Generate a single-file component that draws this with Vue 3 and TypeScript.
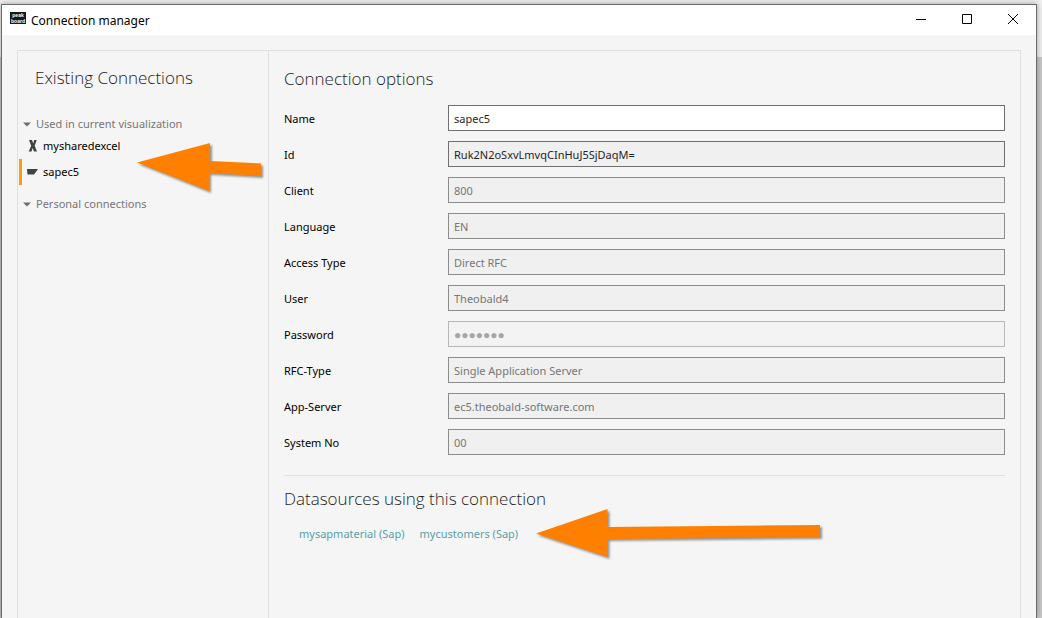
<script setup lang="ts">
import { ref } from 'vue'

type FieldState = 'active' | 'locked' | 'muted' | 'secret'

interface Field {
  id: string
  label: string
  value: string
  state: FieldState
}

interface Connection {
  name: string
  icon: 'excel' | 'sap'
}

interface Group {
  title: string
  items: Connection[]
}

const groups: Group[] = [
  {
    title: 'Used in current visualization',
    items: [
      { name: 'mysharedexcel', icon: 'excel' },
      { name: 'sapec5', icon: 'sap' },
    ],
  },
  { title: 'Personal connections', items: [] },
]

const selected = ref('sapec5')

const fields = ref<Field[]>([
  { id: 'name', label: 'Name', value: 'sapec5', state: 'active' },
  { id: 'id', label: 'Id', value: 'Ruk2N2oSxvLmvqCInHuJ5SjDaqM=', state: 'locked' },
  { id: 'client', label: 'Client', value: '800', state: 'muted' },
  { id: 'language', label: 'Language', value: 'EN', state: 'muted' },
  { id: 'access', label: 'Access Type', value: 'Direct RFC', state: 'muted' },
  { id: 'user', label: 'User', value: 'Theobald4', state: 'muted' },
  { id: 'password', label: 'Password', value: '●●●●●●●', state: 'secret' },
  { id: 'rfc', label: 'RFC-Type', value: 'Single Application Server', state: 'muted' },
  { id: 'server', label: 'App-Server', value: 'ec5.theobald-software.com', state: 'muted' },
  { id: 'system', label: 'System No', value: '00', state: 'muted' },
])

const datasources: string[] = ['mysapmaterial (Sap)', 'mycustomers (Sap)']
</script>

<template>
  <div class="desktop">
    <div class="window">
      <header class="titlebar">
        <svg class="logo" width="16" height="12" viewBox="0 0 16 12" aria-hidden="true">
          <rect width="16" height="12" fill="#16191b" />
          <text x="8" y="5">peak</text>
          <text x="8" y="11">board</text>
        </svg>
        <span class="title">Connection manager</span>
        <button class="control" type="button" aria-label="Minimize">
          <svg width="10" height="10" viewBox="0 0 10 10"><path d="M0 5.500h10" /></svg>
        </button>
        <button class="control" type="button" aria-label="Maximize">
          <svg width="10" height="10" viewBox="0 0 10 10"><path d="M.5.500h9v9h-9z" /></svg>
        </button>
        <button class="control" type="button" aria-label="Close">
          <svg width="10" height="10" viewBox="0 0 10 10"><path d="M0 0l10 10M10 0L0 10" /></svg>
        </button>
      </header>

      <div class="panel">
        <nav class="sidebar">
          <h2>Existing Connections</h2>
          <section v-for="group in groups" :key="group.title" class="group">
            <h3>
              <svg width="8" height="5" viewBox="0 0 8 5"><path d="M0 .5h8L4 4.500z" fill="#6d6d6d" /></svg>
              {{ group.title }}
            </h3>
            <button
              v-for="item in group.items"
              :key="item.name"
              type="button"
              class="item"
              :class="{ selected: item.name === selected }"
              @click="selected = item.name"
            >
              <svg v-if="item.icon === 'excel'" width="12" height="12" viewBox="0 0 12 12">
                <path d="M2 0H5l1.200 3.500L7.200 0H9.700L7.700 5.700 10 11.500H7L5.700 8 4.500 11.500H1.700L4.200 5.800z" fill="#3d4543" />
              </svg>
              <svg v-else width="12" height="12" viewBox="0 0 12 12">
                <path d="M0 3h11L7 8.500H.5z" fill="#3d4543" />
              </svg>
              <span>{{ item.name }}</span>
            </button>
          </section>
        </nav>

        <main class="content">
          <h2>Connection options</h2>
          <form class="form" @submit.prevent>
            <div v-for="field in fields" :key="field.id" class="row">
              <label :for="field.id">{{ field.label }}</label>
              <input
                :id="field.id"
                v-model="field.value"
                type="text"
                :class="field.state"
                :readonly="field.state !== 'active'"
              />
            </div>
          </form>
          <section class="sources">
            <h2>Datasources using this connection</h2>
            <div class="links">
              <a v-for="source in datasources" :key="source" href="#">{{ source }}</a>
            </div>
          </section>
        </main>
      </div>
    </div>

    <svg class="arrow arrow-list" width="134" height="60" viewBox="0 0 134 60" aria-hidden="true">
      <path d="M2 23.500L75 4V22L126 24.500V37L74 34V52z" />
    </svg>
    <svg class="arrow arrow-sources" width="296" height="60" viewBox="0 0 296 60" aria-hidden="true">
      <path d="M2 28.500L73.500 4V22L286 20V32L73.500 34V52z" />
    </svg>
  </div>
</template>

<style>
body {
  margin: 0;
}
</style>

<style scoped>
.desktop {
  position: relative;
  box-sizing: border-box;
  height: 100vh;
  padding: 4px 5px 0 1px;
  overflow: hidden;
  background: linear-gradient(#f0f0f0 57px, #c8c8c8 57px);
  font-family: 'Noto Sans', 'Open Sans', sans-serif;
  font-size: 11px;
  line-height: 18px;
  color: #000;
}

.window {
  display: flex;
  flex-direction: column;
  box-sizing: border-box;
  height: 100%;
  border: 1px solid #6b6b6b;
  border-bottom: 0;
  background: #f5f5f5;
  box-shadow: 0 0 6px rgba(0, 0, 0, 0.35);
}

.titlebar {
  display: flex;
  flex: none;
  height: 30px;
  padding-left: 8px;
  background: #fff;
}

.logo {
  margin: 7px 5px 0 0;
}

.logo text {
  fill: #fff;
  font-family: 'Liberation Sans', sans-serif;
  font-size: 5px;
  font-weight: 700;
  text-anchor: middle;
}

.title {
  flex: 1;
  font-size: 12px;
  line-height: 31px;
}

.control {
  display: flex;
  align-items: center;
  justify-content: center;
  width: 46px;
  height: 28px;
  padding: 0;
  border: 0;
  background: none;
}

.control path {
  fill: none;
  stroke: #000;
}

.panel {
  display: flex;
  flex: 1;
  margin: 15px 15px 0;
  border: 1px solid #e0e0e0;
  border-bottom: 0;
}

h2,
h3 {
  margin: 0;
  font-weight: 400;
}

h2 {
  font-family: 'Open Sans', 'Noto Sans', sans-serif;
  font-size: 17px;
  font-weight: 300;
  line-height: 24px;
  color: #1c1c1c;
}

.sidebar {
  flex: none;
  width: 250px;
  border-right: 1px solid #e0e0e0;
}

.sidebar h2 {
  padding: 15px 0 25px 17px;
}

.group {
  margin-bottom: 10px;
}

.group h3 {
  display: flex;
  align-items: center;
  gap: 5px;
  padding-left: 5px;
  font-size: 11px;
  color: #767676;
}

.item {
  display: flex;
  align-items: center;
  gap: 4px;
  box-sizing: border-box;
  width: 100%;
  height: 26px;
  padding: 0 0 0 5px;
  border: 0;
  border-left: 3px solid transparent;
  margin-left: 1px;
  background: none;
  font: inherit;
  color: #000;
}

.item.selected {
  border-left-color: #ff9a0d;
}

.content {
  flex: 1;
  min-width: 0;
  padding: 16px 15px 0;
}

.form {
  display: flex;
  flex-direction: column;
  gap: 10px;
  margin: 14px 0 20px;
}

.row {
  display: flex;
  align-items: center;
}

.row label {
  flex: none;
  width: 164px;
  padding-top: 2px;
}

.row input {
  flex: 1;
  box-sizing: border-box;
  min-width: 0;
  height: 26px;
  padding: 0 5px;
  border: 1px solid #707070;
  border-radius: 0;
  outline: 0;
  background: #f0f0f0;
  font: inherit;
  color: #1f1f1f;
}

.row input.active {
  background: #fff;
}

.row input.muted {
  border-color: #8c8c8c;
  color: #767676;
}

.row input.secret {
  border-color: #b8b8b8;
  background: #f3f3f3;
  font-size: 12px;
  color: #a5a5a5;
}

.sources {
  padding-top: 11px;
  border-top: 1px solid #e0e0e0;
}

.links {
  display: flex;
  gap: 15px;
  padding: 14px 15px;
}

.links a {
  color: #5b9ea3;
  text-decoration: none;
}

.arrow {
  position: absolute;
  fill: #ff8000;
  filter: drop-shadow(2px 2px 1px rgba(0, 0, 0, 0.4));
}

.arrow-list {
  top: 139px;
  left: 135px;
}

.arrow-sources {
  top: 505px;
  left: 534px;
}
</style>
